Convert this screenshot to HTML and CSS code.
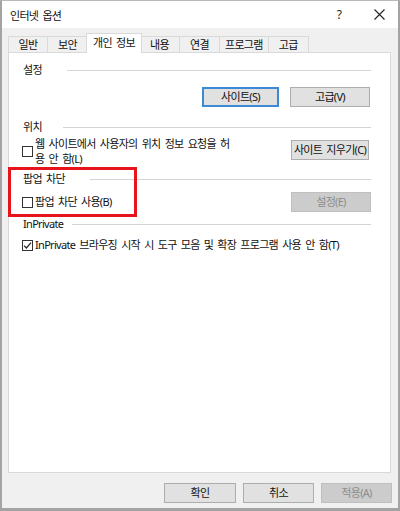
FILE: index.html
```html
<!DOCTYPE html>
<html lang="ko">
<head>
<meta charset="utf-8">
<title>인터넷 옵션</title>
<link rel="stylesheet" href="styles.css">
</head>
<body>
<div class="window">
  <div class="titlebar">
    <span class="title">인터넷 옵션</span>
    <span class="help">?</span>
    <span class="close"><svg width="11" height="11" viewBox="0 0 11 11"><path d="M0.5 0.5L10.5 10.5M10.5 0.5L0.5 10.5" stroke="#222" stroke-width="1.1" fill="none"/></svg></span>
  </div>
  <div class="tabs">
    <div class="tab">일반</div>
    <div class="tab">보안</div>
    <div class="tab active">개인 정보</div>
    <div class="tab">내용</div>
    <div class="tab">연결</div>
    <div class="tab">프로그램</div>
    <div class="tab">고급</div>
  </div>
  <div class="panel">
    <div class="group-head head-settings"><span>설정</span><i class="rule"></i></div>
    <div class="btn-row">
      <button class="btn default site">사이트(S)</button>
      <button class="btn adv">고급(V)</button>
    </div>

    <div class="group-head head-location"><span>위치</span><i class="rule"></i></div>
    <div class="opt-row location-row">
      <label class="check">
        <span class="box"></span>
        <span class="check-text two-line">웹 사이트에서 사용자의 위치 정보 요청을 허<br>용 안 함(L)</span>
      </label>
      <button class="btn clear">사이트 지우기(C)</button>
    </div>

    <div class="group-head head-popup"><span>팝업 차단</span><i class="rule"></i></div>
    <div class="opt-row popup-row">
      <label class="check">
        <span class="box"></span>
        <span class="check-text">팝업 차단 사용(B)</span>
      </label>
      <button class="btn disabled popup-set">설정(E)</button>
    </div>

    <div class="group-head head-private"><span>InPrivate</span><i class="rule"></i></div>
    <div class="opt-row private-row">
      <label class="check">
        <span class="box"><svg width="9" height="9" viewBox="0 0 9 9"><path d="M1 4.6L3.4 7L8 1.6" stroke="#222" stroke-width="1.2" fill="none"/></svg></span>
        <span class="check-text">InPrivate 브라우징 시작 시 도구 모음 및 확장 프로그램 사용 안 함(T)</span>
      </label>
    </div>

    <div class="highlight"></div>
  </div>
  <div class="footer">
    <button class="btn ok">확인</button>
    <button class="btn cancel">취소</button>
    <button class="btn disabled apply">적용(A)</button>
  </div>
</div>
</body>
</html>
```

FILE: styles.css
```css
* { box-sizing: border-box; }

html, body {
  margin: 0;
  padding: 0;
  background: #ffffff;
}

body {
  font-family: "Noto Sans", "Noto Sans CJK KR", sans-serif;
  font-size: 11px;
  letter-spacing: -0.7px;
  word-spacing: 2px;
  color: #111;
}

.window {
  width: 400px;
  height: 511px;
  background: #f0f0f0;
  border-top: 1px solid #b9b9b9;
  border-left: 2px solid #a3a3a3;
  border-right: 2px solid #a3a3a3;
  border-bottom: 3px solid #a3a3a3;
  display: flex;
  flex-direction: column;
}

/* Title bar */
.titlebar {
  height: 27px;
  background: #ffffff;
  display: flex;
  align-items: center;
  padding-left: 8px;
  flex: none;
}

.title {
  flex: 1;
  color: #111;
}

.help {
  font-size: 12px;
  letter-spacing: 0;
  color: #222;
  margin-right: 32px;
}

.close {
  display: flex;
  margin-right: 13px;
}

/* Tabs */
.tabs {
  height: 25px;
  flex: none;
  display: flex;
  align-items: flex-end;
  padding-left: 6px;
  margin-bottom: -1px;
  position: relative;
  z-index: 1;
}

.tab {
  height: 16px;
  margin-bottom: 1px;
  min-width: 40px;
  padding: 0 5px;
  border: 1px solid #d9d9d9;
  border-bottom: none;
  border-left: none;
  background: #f0f0f0;
  display: flex;
  align-items: center;
  justify-content: center;
  line-height: 1;
  white-space: nowrap;
}

.tab:first-child {
  border-left: 1px solid #d9d9d9;
}

.tab.active {
  height: 20px;
  margin: 0 -2px 0 -2px;
  padding: 0 5px 2px;
  min-width: 56px;
  background: #ffffff;
  border-left: 1px solid #d9d9d9;
  position: relative;
  z-index: 2;
}

/* Panel */
.panel {
  position: relative;
  flex: none;
  height: 421px;
  margin: 0 7px 0 6px;
  background: #ffffff;
  border: 1px solid #d9d9d9;
  padding: 10px 19px 0 14px;
}

.group-head {
  height: 14px;
  display: flex;
  align-items: center;
  gap: 7px;
  line-height: 14px;
  color: #111;
}

.rule {
  flex: 1;
  height: 1px;
  background: #d5d5d5;
  margin-top: 1px;
}

.head-location { margin-top: 13px; }
.head-location .rule { margin-left: 14px; }
.head-popup { margin-top: 6px; }
.head-popup .rule { margin-left: 18px; }
.head-private { margin-top: 5px; }
.head-private .rule { margin-left: 2px; }
.head-settings .rule { margin-left: 18px; }

/* Buttons */
.btn {
  font: inherit;
  letter-spacing: inherit;
  word-spacing: inherit;
  color: #111;
  height: 20px;
  padding: 0;
  margin: 0;
  background: #e1e1e1;
  border: 1px solid #adadad;
  white-space: nowrap;
  text-align: center;
  line-height: 18px;
}

.btn.default {
  border: 2px solid #3c8ad6;
  line-height: 16px;
}

.btn.disabled {
  background: #cccccc;
  border-color: #bfbfbf;
  color: #8d8d8d;
}

.btn-row {
  margin-top: 10px;
  display: flex;
  justify-content: flex-end;
  gap: 11px;
  padding-right: 1px;
}

.site { width: 77px; }
.adv { width: 80px; }

/* Option rows */
.opt-row {
  display: flex;
  justify-content: space-between;
  align-items: center;
}

.location-row {
  margin-top: 5px;
  align-items: flex-start;
}

.location-row .check {
  margin-top: -3px;
}

.location-row .btn.clear {
  width: 78px;
  margin-top: 1px;
  margin-right: 2px;
  overflow: visible;
}

.popup-row {
  margin-top: 6px;
}

.popup-set { width: 80px; }

.private-row {
  margin-top: 7px;
}

.check {
  display: flex;
  align-items: center;
  gap: 2px;
  margin-left: -1px;
}

.box {
  width: 11px;
  height: 11px;
  border: 1px solid #333;
  background: #fff;
  flex: none;
  display: flex;
  align-items: center;
  justify-content: center;
}

.check-text {
  line-height: 14px;
  white-space: nowrap;
}

.check-text.two-line {
  line-height: 15px;
}

/* Red annotation box */
.highlight {
  position: absolute;
  left: -1px;
  top: 114px;
  width: 129px;
  height: 50px;
  border: 3px solid #e8141b;
  pointer-events: none;
}

/* Footer */
.footer {
  flex: none;
  margin-top: 10px;
  display: flex;
  justify-content: flex-end;
  gap: 7px;
  padding-right: 6px;
}

.ok { width: 72px; }
.cancel { width: 71px; }
.apply { width: 71px; }
```
